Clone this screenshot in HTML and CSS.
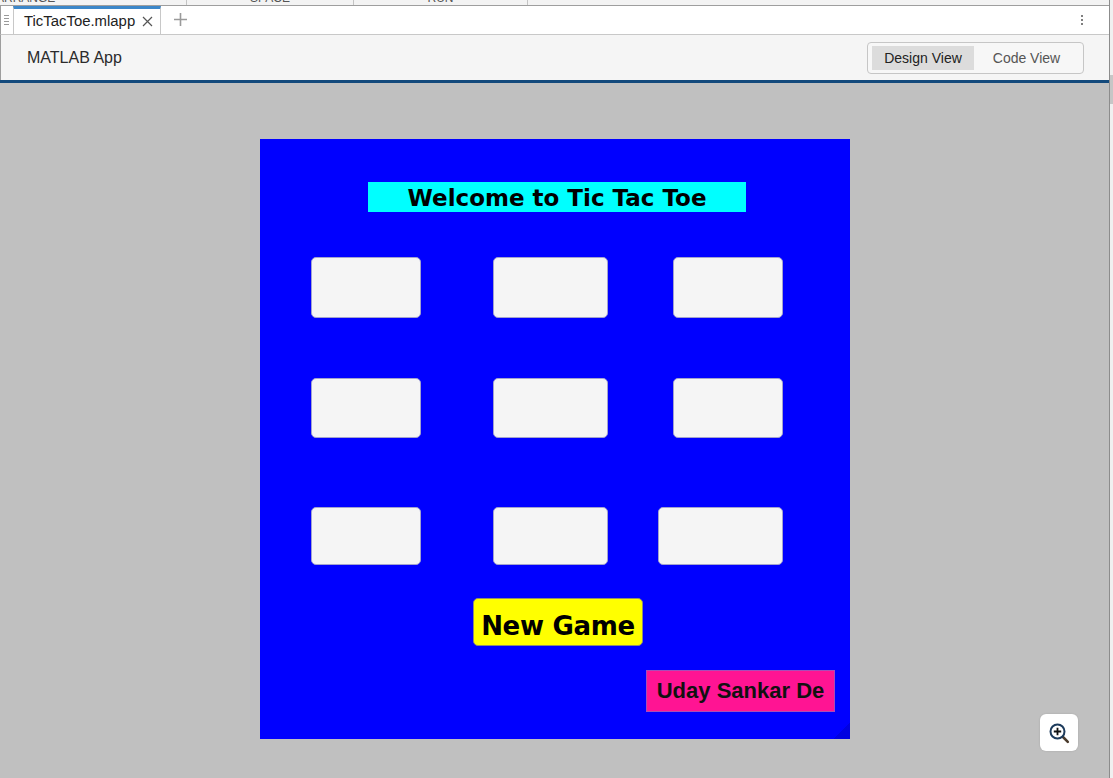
FILE: index.html
```html
<!DOCTYPE html>
<html lang="en">
<head>
<meta charset="utf-8">
<title>TicTacToe.mlapp</title>
<link rel="stylesheet" href="styles.css">
</head>
<body>
<div class="screen">
  <div class="window">
    <div class="strip">
      <div class="strip-cell cell-arrange"><span class="strip-label left">ARRANGE</span></div>
      <div class="strip-cell cell-space"><span class="strip-label">SPACE</span></div>
      <div class="strip-cell cell-run"><span class="strip-label">RUN</span></div>
      <div class="strip-cell cell-rest"></div>
    </div>
    <div class="tabbar">
      <div class="grip">
        <span></span><span></span><span></span><span></span>
      </div>
      <div class="tab">
        <span class="tab-title">TicTacToe.mlapp</span>
        <svg class="tab-close" width="11" height="11" viewBox="0 0 11 11"><path d="M1 1L10 10M10 1L1 10" stroke="#555" stroke-width="1.2" fill="none"/></svg>
      </div>
      <svg class="tab-add" width="13" height="13" viewBox="0 0 13 13"><path d="M6.5 0V13M0 6.5H13" stroke="#9a9a9a" stroke-width="1.6" fill="none"/></svg>
      <div class="tab-spacer"></div>
      <div class="kebab"><span></span><span></span><span></span></div>
    </div>
    <div class="header">
      <div class="app-name">MATLAB App</div>
      <div class="toggle">
        <div class="toggle-item selected">Design View</div>
        <div class="toggle-item">Code View</div>
      </div>
    </div>
    <div class="accent"></div>
    <div class="canvas">
      <div class="panel">
        <div class="title-label">Welcome to Tic Tac Toe</div>
        <button class="cell c1r1"></button>
        <button class="cell c2r1"></button>
        <button class="cell c3r1"></button>
        <button class="cell c1r2"></button>
        <button class="cell c2r2"></button>
        <button class="cell c3r2"></button>
        <button class="cell c1r3"></button>
        <button class="cell c2r3"></button>
        <button class="cell c3r3"></button>
        <button class="new-game">New Game</button>
        <div class="name-label">Uday Sankar De</div>
        <div class="panel-grip"></div>
      </div>
      <div class="zoom-btn">
        <svg width="24" height="24" viewBox="0 0 24 24">
          <path d="M14.5 14.5L19.8 19.8" stroke="#4a3b2c" stroke-width="2.6" stroke-linecap="round"/>
          <circle cx="9.5" cy="9.5" r="7" fill="#fff" stroke="#1d3b5c" stroke-width="2"/>
          <path d="M9.5 5.8V13.2M5.8 9.5H13.2" stroke="#111" stroke-width="1.8"/>
        </svg>
      </div>
    </div>
  </div>
  <div class="scroll-strip">
    <div class="scroll-top"></div>
    <div class="scroll-thumb"></div>
  </div>
</div>
</body>
</html>
```

FILE: styles.css
```css
* { box-sizing: border-box; }
html, body {
  margin: 0;
  padding: 0;
  width: 1113px;
  height: 778px;
  overflow: hidden;
  font-family: "Liberation Sans", Arial, sans-serif;
  background: #eeeeee;
}
.screen {
  display: flex;
  width: 1113px;
  height: 778px;
}
.window {
  width: 1110px;
  height: 778px;
  display: flex;
  flex-direction: column;
  border-right: 1px solid #8c8c8c;
}
.scroll-strip {
  width: 3px;
  display: flex;
  flex-direction: column;
  background: #f0f0f0;
}
.scroll-top { height: 75px; }
.scroll-thumb { height: 29px; background: #c6c6c6; }

/* top strip */
.strip {
  height: 6px;
  display: flex;
  background: #f3f3f3;
  border-bottom: 1px solid #9e9e9e;
  overflow: hidden;
}
.strip-cell {
  height: 5px;
  border-right: 1px solid #c4c4c4;
  display: flex;
  justify-content: center;
  overflow: hidden;
}
.cell-arrange { width: 187px; justify-content: flex-start; }
.cell-space { width: 167px; }
.cell-run { width: 174px; }
.cell-rest { flex: 1; border-right: none; }
.strip-label {
  font-size: 12px;
  line-height: 11px;
  margin-top: -7px;
  color: #555;
  white-space: nowrap;
}
.strip-label.left { margin-left: -4px; }

/* tabbar */
.tabbar {
  height: 29px;
  display: flex;
  align-items: stretch;
  background: #fff;
  border-bottom: 1px solid #c8c8c8;
  border-left: 1px solid #9e9e9e;
}
.grip {
  width: 12px;
  display: flex;
  flex-direction: column;
  justify-content: center;
  gap: 2px;
  padding-left: 3px;
}
.grip span {
  display: block;
  width: 5px;
  height: 1px;
  background: #9a9a9a;
}
.tab {
  width: 148px;
  display: flex;
  align-items: center;
  border-top: 3px solid #3c87c9;
  border-left: 1px solid #c8c8c8;
  border-right: 1px solid #c8c8c8;
  padding-left: 10px;
  padding-bottom: 1px;
}
.tab-title {
  font-size: 14.9px;
  color: #222;
  white-space: nowrap;
}
.tab-close { margin-left: 7px; margin-top: 1px; }
.tab-add { margin-left: 13px; align-self: center; margin-top: -1px; }
.tab-spacer { flex: 1; }
.kebab {
  width: 26px;
  display: flex;
  flex-direction: column;
  align-items: center;
  justify-content: center;
  gap: 2px;
  margin-right: 14px;
}
.kebab span {
  width: 2px;
  height: 2px;
  border-radius: 1px;
  background: #555;
}

/* header */
.header {
  height: 45px;
  display: flex;
  align-items: center;
  justify-content: space-between;
  background: #f5f5f5;
  border-left: 1px solid #9e9e9e;
  padding-left: 26px;
  padding-right: 25px;
}
.app-name {
  font-size: 16px;
  color: #2b2b2b;
}
.toggle {
  width: 217px;
  height: 32px;
  display: flex;
  border: 1px solid #c6c6c6;
  border-radius: 4px;
  background: #f7f7f7;
  padding: 3px 4px 3px 4px;
  margin-top: 1px;
}
.toggle-item {
  flex: 1;
  display: flex;
  align-items: center;
  justify-content: center;
  font-size: 14px;
  color: #555;
}
.toggle-item.selected {
  flex: 0 0 102px;
  background: #dcdcdc;
  color: #222;
}
.accent {
  height: 3px;
  background: #134a7c;
}

/* canvas */
.canvas {
  flex: 1;
  position: relative;
  background: #c0c0c0;
  display: flex;
  justify-content: center;
  align-items: flex-start;
  padding-top: 56px;
  padding-left: 1px;
}
.panel {
  position: relative;
  width: 590px;
  height: 600px;
  background: #0000ff;
}
.title-label {
  position: absolute;
  left: 108px;
  top: 43px;
  width: 378px;
  height: 30px;
  background: #00ffff;
  color: #000;
  font-family: "DejaVu Sans", Verdana, sans-serif;
  font-weight: bold;
  font-size: 23px;
  display: flex;
  align-items: center;
  justify-content: center;
  padding-top: 1px;
}
.cell {
  position: absolute;
  margin: 0;
  padding: 0;
  background: #f5f5f5;
  border: 1px solid #a2a2cf;
  border-radius: 5px;
}
.c1r1, .c1r2, .c1r3 { left: 51px; width: 110px; }
.c2r1, .c2r2, .c2r3 { left: 233px; width: 115px; }
.c3r1, .c3r2 { left: 413px; width: 110px; }
.c3r3 { left: 398px; width: 125px; }
.c1r1, .c2r1, .c3r1 { top: 118px; height: 61px; }
.c1r2, .c2r2, .c3r2 { top: 239px; height: 60px; }
.c1r3, .c2r3, .c3r3 { top: 368px; height: 58px; }
.new-game {
  position: absolute;
  left: 213px;
  top: 459px;
  width: 170px;
  height: 48px;
  margin: 0;
  padding: 7px 0 0 0;
  background: #ffff00;
  border: 1px solid #8e8e70;
  border-radius: 5px;
  color: #000;
  font-family: "Comic Sans MS", "DejaVu Sans", sans-serif;
  font-weight: bold;
  font-size: 26px;
  letter-spacing: -0.3px;
}
.name-label {
  position: absolute;
  left: 386px;
  top: 531px;
  width: 189px;
  height: 42px;
  background: #ff1493;
  border: 1px solid #a84cb8;
  color: #111;
  font-family: "Liberation Sans", Arial, sans-serif;
  font-weight: bold;
  font-size: 22px;
  display: flex;
  align-items: center;
  justify-content: center;
  padding-bottom: 1px;
}
.panel-grip {
  position: absolute;
  right: 0;
  bottom: 0;
  width: 16px;
  height: 16px;
  background: linear-gradient(135deg, transparent 50%, rgba(0, 0, 90, 0.18) 50%);
}
.zoom-btn {
  position: absolute;
  right: 31px;
  bottom: 27px;
  width: 38px;
  height: 37px;
  background: #fff;
  border-radius: 6px;
  box-shadow: 0 0 2px rgba(0, 0, 0, 0.15);
  display: flex;
  align-items: center;
  justify-content: center;
}
.zoom-btn svg { margin-left: 1px; margin-top: 2px; }
```
